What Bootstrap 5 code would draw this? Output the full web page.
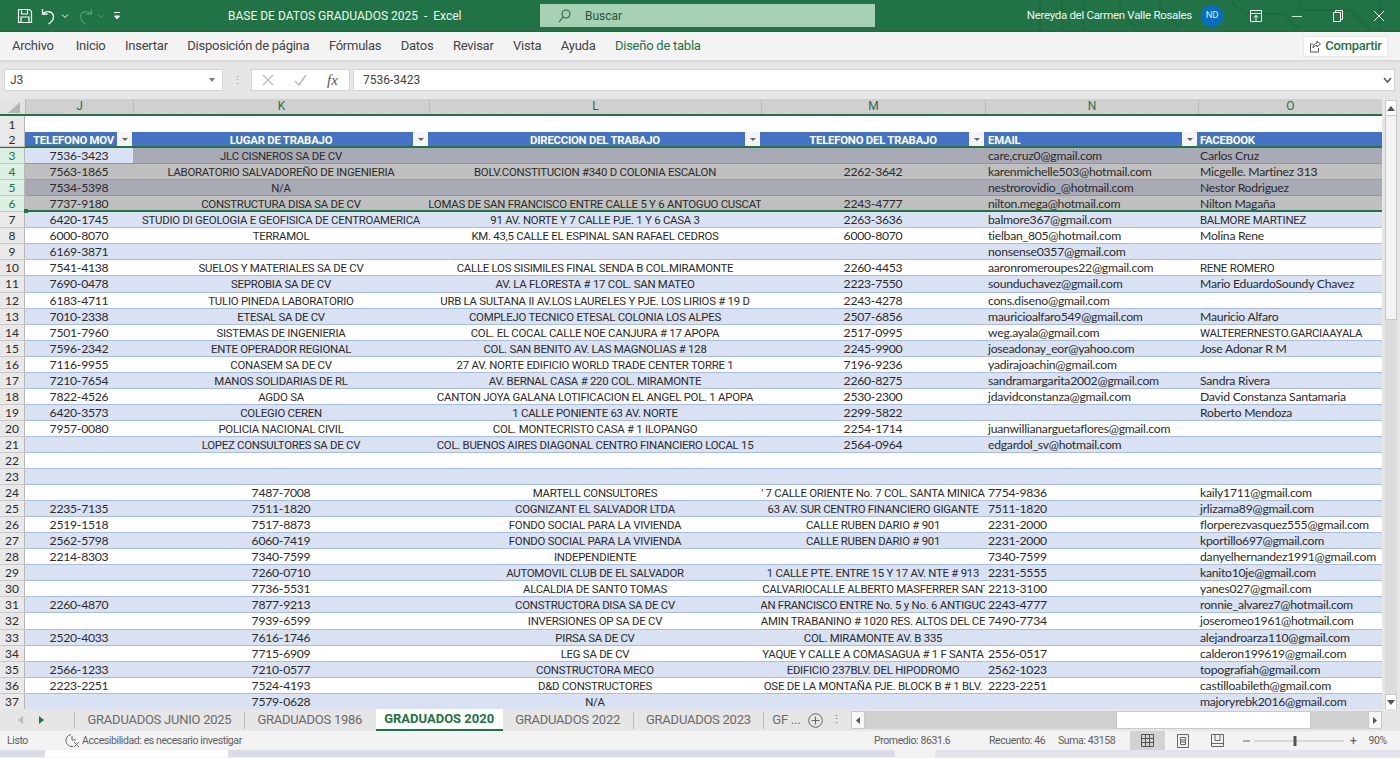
<!DOCTYPE html>
<html lang="es"><head><meta charset="utf-8"><title>BASE DE DATOS GRADUADOS 2025 - Excel</title>
<link href="https://cdn.jsdelivr.net/npm/bootstrap@5.3.0/dist/css/bootstrap.min.css" rel="stylesheet">
<style>
html,body{height:758px;overflow:hidden;background:#f3f3f3}
body{font-family:Roboto,"Liberation Sans",sans-serif;color:#333;font-size:12px}
.xl-title{height:31px;background:#217346;color:#eef6f0;position:relative}
.xl-qat{width:228px;padding-left:17px}
.xl-doc{width:312px;font-size:12px;white-space:pre}
.xl-search{width:335px;height:23px;background:#a7d1b3;color:#28563b;padding-left:18px;gap:14px;font-size:12px}
.xl-user{margin-left:auto;margin-right:1px;font-size:11.5px;letter-spacing:-.3px;white-space:nowrap}
.xl-avatar{width:22px;height:22px;border-radius:50%;background:#0a6dc2;font-size:9.5px;margin:0 12px 0 9px;color:#dcecf8}
.xl-winbtn{width:41px;display:flex;justify-content:center}
.xl-ribbon{height:29px;background:#f3f3f3;padding-left:12px;gap:19.5px;font-size:13px;letter-spacing:-.25px;color:#444;border-top:1px solid #1d6a40}
.xl-ribbon .xl-file{margin-right:2.5px}
.xl-ribbon .xl-design{color:#217346}
.xl-share{margin-left:auto;margin-right:12px;width:85px;height:21px;background:#fff;border:1px solid #e8e8e8;color:#217346;font-size:13px;font-weight:500;gap:4px}
.xl-fbar{height:39px;background:#e6e6e6;padding:9px 5px 8px 4px;box-shadow:inset 0 4px 3px -3px #cfcfcf}
.xl-box{height:22px;background:#fff;border:1px solid #d4d4d4;font-size:12px;color:#444}
.xl-name{width:219px;padding:0 6px 0 5px}
.xl-dots{width:28px;color:#999;text-align:center;font-size:11px;line-height:1}
.xl-tools{width:99px;gap:20px;padding-left:10px}
.xl-input{flex:1;margin-left:3px;padding:0 2px 0 9px}
.xl-sheet{height:611px;background:#e6e6e6}
.xl-cols{height:17px;display:grid;grid-template-columns:25px 108px 296px 332px 224px 213px 184px;background:#d0d0d0;border-bottom:2px solid #217346;color:#2d6e4a;font-size:12px;text-align:center;line-height:15px;width:1382px}
.xl-cols>div{border-left:1px solid #bbb}
.xl-corner{background:#e3e3e3;position:relative;border-left:0!important;overflow:hidden}
.xl-corner svg{display:block;margin:1px 0 0 3px}
table.xl-grid{display:block;width:1382px;font-family:Roboto,"Liberation Sans",sans-serif;font-size:11.4px;letter-spacing:-.25px;color:#2b2b2b}
.xl-grid tbody{display:block}
.xl-grid tr{display:grid;grid-template-columns:25px 108px 296px 332px 224px 213px 184px;height:16.06px;background:#fff;border-bottom:1px solid #a9bde3}
.xl-grid tr.xl-b{background:#d9e2f3}
.xl-grid th,.xl-grid td{display:flex;justify-content:center;align-items:center;overflow:hidden;white-space:nowrap;padding:1px 0 0;font-weight:400;line-height:14px}
.xl-grid tr:not(.xl-hd) td:nth-child(2),.xl-grid tr:not(.xl-hd):nth-child(n+24) td:nth-child(3),.xl-grid tr:not(.xl-hd):nth-child(-n+21) td:nth-child(5),.xl-grid tr:not(.xl-hd) td.xl-l:not(.xl-cap){font-family:Lato,"Liberation Sans",sans-serif;font-size:12.2px;letter-spacing:-.25px}
.xl-grid th{background:#e9e9e9;border-right:1px solid #b7b7b7;font-size:12px;letter-spacing:0;font-family:Lato,sans-serif;box-shadow:0 1px 0 #c9c9c9}
.xl-grid td.xl-l{justify-content:flex-start;padding-left:3px}
.xl-grid td:nth-child(7).xl-l{padding-left:2px}
.xl-grid tr.xl-blank{border-bottom:0}
.xl-grid tr.xl-hd{background:#4472c4;border-bottom:2px solid #217346;height:16.06px}
.xl-grid tr.xl-hd td{color:#fff;font-weight:700;position:relative;padding-top:2px}
.xl-grid tr.xl-hd td:nth-child(2){justify-content:flex-start;padding-left:8px}
.xl-grid tr.xl-hd th{background:#e9e9e9}
.xl-flt{position:absolute;right:1px;top:0;width:15px;height:15px;background:#f4f4f4;display:flex;align-items:center;justify-content:center}
.xl-flt::after{content:"";border:3px solid transparent;border-top:3px solid #666;margin-top:3px}
.xl-grid tr.xl-s th{background:#dcefe3;color:#217346}
.xl-grid tr.xl-g1{background:#a8aab6;border-bottom-color:#8f94a8}
.xl-grid tr.xl-g2{background:#bfbfbf;border-bottom-color:#9aa0b2}
.xl-grid tr.xl-g1 .xl-act{background:#d9e2f3}
.xl-grid tr.xl-end{border-bottom:2px solid #217346;position:relative}
.xl-grid tr.xl-end th{position:relative;overflow:visible}
.xl-grid tr.xl-end th::after{content:"";position:absolute;right:-4px;bottom:-2px;width:4px;height:4px;background:#217346}
.xl-vs{width:18px;padding:1px 3px 0}
.xl-vbtn{height:16px;background:#fff;border:1px solid #c9c9c9;display:flex;align-items:center;justify-content:center}
.xl-vthumb{height:204px;background:#f3f3f3;border:1px solid #c9c9c9;border-top:0}
.xl-vfree{flex:1;background:#dcdcdc}
.xl-tabs{height:22px;background:#e6e6e6;font-size:13px;color:#6a6a6a;white-space:nowrap;margin-top:-1px}
.xl-nav{width:75px;gap:16px;padding-left:18px;border-right:1px solid #bdbdbd;height:17px}
.xl-tab{padding:0 12.5px;height:17px;border-right:1px solid #bdbdbd;line-height:15px;letter-spacing:-.25px}
.xl-tab.xl-plain{border-right:0}
.xl-tab.xl-active{height:22px;line-height:20px;padding:0 8.5px;background:#fff;color:#217346;font-weight:700;border:0;border-bottom:2px solid #217346;margin-left:1px;letter-spacing:0}
.xl-hs{height:18px;background:#d0d0d0;flex:0 0 531px;margin-left:auto;margin-right:18px}
.xl-hbtn{width:14px;height:18px;background:#f7f7f7;border:1px solid #c9c9c9;display:flex;align-items:center;justify-content:center}
.xl-hthumb{width:195px;height:18px;background:#fff;border:1px solid #c9c9c9;margin-left:251px;margin-right:57px}
.xl-status{height:19px;background:#f3f3f3;font-size:10.5px;letter-spacing:-.4px;color:#5e5e5e;padding-left:7px;white-space:nowrap}
.xl-vw{width:35px;height:19px;display:flex;align-items:center;justify-content:center}
.xl-vw.xl-on{background:#d3d3d3}
.xl-zoom{margin-left:8px;font-size:12px}
.xl-zoom .xl-plus{margin-left:3px}
.xl-zoom .xl-pct{margin-left:12px;font-size:10.5px}
.xl-taskbar{height:7px;background:#d9dde6}
.xl-tb1{width:45px}.xl-tb2{width:183px;background:#fff}.xl-tb3{width:667px}.xl-tb4{width:40px;background:#f2f2f2}.xl-tb5{flex:1;background:#e1e4eb}
</style></head><body>
<div class="xl-title d-flex align-items-center">
  <svg class="position-absolute top-0 end-0" width="400" height="31" fill="none" stroke="#1e6b41" stroke-width="2"><path d="M40 0v31M62 0v31M84 0v31M120 0v12l14 14v5M160 0v8l20 20M230 0l14 14h40l14 14M300 0v10h50l20 20M380 0v31"/></svg>
  <div class="xl-qat d-flex align-items-center position-relative">
    <svg width="16" height="16" viewBox="0 0 16 16" fill="none" stroke="#fff" stroke-width="1.2"><path d="M1.500 1.500h11l2 2v11h-13zM4.500 1.500v4.500h6v-4.500M4 14.500v-5.500h8v5.500"/></svg>
    <svg class="ms-2" width="16" height="18" viewBox="0 0 16 18" fill="none" stroke="#fff" stroke-width="1.3"><path d="M1.500 2v5h5M1.500 7c3-4 11-3 11 3 0 3-2 5-5 7"/></svg>
    <svg class="ms-1" width="8" height="8" viewBox="0 0 8 8" fill="none" stroke="#fff"><path d="M1 2.500l3 3 3-3"/></svg>
    <svg class="ms-2" width="16" height="18" viewBox="0 0 16 18" fill="none" stroke="#4f9a70" stroke-width="1.3"><path d="M14.500 2v5h-5M14.500 7c-3-4-11-3-11 3 0 3 2 5 5 7"/></svg>
    <svg class="ms-1" width="8" height="8" viewBox="0 0 8 8" fill="none" stroke="#4f9a70"><path d="M1 2.500l3 3 3-3"/></svg>
    <svg class="ms-2" width="8" height="10" viewBox="0 0 8 10" fill="#fff" stroke="#fff"><path d="M1 1.500h6" fill="none"/><path d="M1.500 5h5l-2.500 3z"/></svg>
  </div>
  <div class="xl-doc position-relative">BASE DE DATOS GRADUADOS 2025  -  Excel</div>
  <div class="xl-search d-flex align-items-center position-relative">
    <svg width="13" height="14" viewBox="0 0 13 14" fill="none" stroke="#2a5c3f" stroke-width="1.1"><circle cx="8" cy="5" r="4"/><path d="M5 8l-4 5"/></svg><span>Buscar</span>
  </div>
  <div class="xl-user d-flex align-items-center position-relative">
    <span>Nereyda del Carmen Valle Rosales</span>
    <span class="xl-avatar d-flex align-items-center justify-content-center">ND</span>
    <span class="xl-winbtn"><svg width="14" height="14" viewBox="0 0 14 14" fill="none" stroke="#fff"><path d="M1.500 1.500h11v11h-11zM1.500 4.500h11M7 12V6.500M4.800 8.500L7 6.300l2.200 2.200"/></svg></span>
    <span class="xl-winbtn"><svg width="12" height="12" viewBox="0 0 12 12" stroke="#cfe3d7"><path d="M1 6.500h10"/></svg></span>
    <span class="xl-winbtn"><svg width="12" height="14" viewBox="0 0 12 14" fill="none" stroke="#fff"><path d="M1.500 3.500h7v9h-7zM3.500 3.500v-2h7v9h-2"/></svg></span>
    <span class="xl-winbtn"><svg width="12" height="12" viewBox="0 0 12 12" stroke="#fff"><path d="M1 1l10 10M11 1L1 11"/></svg></span>
  </div>
</div>
<div class="xl-ribbon d-flex align-items-center">
  <span class="xl-file">Archivo</span><span>Inicio</span><span>Insertar</span><span>Disposición de página</span><span>Fórmulas</span><span>Datos</span><span>Revisar</span><span>Vista</span><span>Ayuda</span><span class="xl-design">Diseño de tabla</span>
  <span class="xl-share d-flex align-items-center justify-content-center"><svg width="12" height="13" viewBox="0 0 12 13" fill="none" stroke="#555"><path d="M4 4H1.500v8h8V8M4 8c0-3 2-5 4-5V1l3.500 3L8 7V5.500C6 5.500 5 6.500 4 8z"/></svg>Compartir</span>
</div>
<div class="xl-fbar d-flex">
  <div class="xl-box xl-name d-flex align-items-center justify-content-between"><span>J3</span><svg width="8" height="6" viewBox="0 0 8 6" fill="#777"><path d="M1 1h6L4 5z"/></svg></div>
  <div class="xl-dots d-flex align-items-center justify-content-center">⋮</div>
  <div class="xl-box xl-tools d-flex align-items-center">
    <svg width="12" height="12" viewBox="0 0 12 12" stroke="#bbb" stroke-width="1.4"><path d="M1 1l10 10M11 1L1 11"/></svg>
    <svg width="13" height="12" viewBox="0 0 13 12" fill="none" stroke="#bbb" stroke-width="1.6"><path d="M1 7l4 4 7-10"/></svg>
    <span style="font-family:'Liberation Serif',serif;font-style:italic;font-size:15px;color:#555">fx</span>
  </div>
  <div class="xl-box xl-input d-flex align-items-center justify-content-between"><span>7536-3423</span><svg width="9" height="7" viewBox="0 0 9 7" fill="none" stroke="#555" stroke-width="1.500"><path d="M1 1l3.500 4L8 1"/></svg></div>
</div>
<div class="xl-sheet d-flex">
 <div>
  <div class="xl-cols"><div class="xl-corner"><svg width="20" height="14" viewBox="0 0 20 14" fill="#b5b5b5"><path d="M17 2v11H5z"/></svg></div><div>J</div><div>K</div><div>L</div><div>M</div><div>N</div><div>O</div></div>
  <table class="xl-grid"><tbody>
<tr class="xl-blank"><th>1</th><td></td><td></td><td></td><td></td><td></td><td></td></tr>
<tr class="xl-hd"><th>2</th><td>TELEFONO MOV<span class="xl-flt"></span></td><td>LUGAR DE TRABAJO<span class="xl-flt"></span></td><td>DIRECCION DEL TRABAJO<span class="xl-flt"></span></td><td>TELEFONO DEL TRABAJO<span class="xl-flt"></span></td><td class="xl-l xl-cap">EMAIL<span class="xl-flt"></span></td><td class="xl-l xl-cap">FACEBOOK</td></tr>
<tr class="xl-s xl-g1"><th>3</th><td class="xl-act">7536-3423</td><td>JLC CISNEROS SA DE CV</td><td></td><td></td><td class="xl-l">care,cruz0@gmail.com</td><td class="xl-l">Carlos Cruz</td></tr>
<tr class="xl-s xl-g2"><th>4</th><td>7563-1865</td><td>LABORATORIO SALVADOREÑO DE INGENIERIA</td><td>BOLV.CONSTITUCION #340 D COLONIA ESCALON</td><td>2262-3642</td><td class="xl-l">karenmichelle503@hotmail.com</td><td class="xl-l">Micgelle. Martinez 313</td></tr>
<tr class="xl-s xl-g1"><th>5</th><td>7534-5398</td><td>N/A</td><td></td><td></td><td class="xl-l">nestrorovidio_@hotmail.com</td><td class="xl-l">Nestor Rodriguez</td></tr>
<tr class="xl-s xl-g2 xl-end"><th>6</th><td>7737-9180</td><td>CONSTRUCTURA DISA SA DE CV</td><td>LOMAS DE SAN FRANCISCO ENTRE CALLE 5 Y 6 ANTOGUO CUSCAT</td><td>2243-4777</td><td class="xl-l">nilton.mega@hotmail.com</td><td class="xl-l">Nilton Magaña</td></tr>
<tr class="xl-b"><th>7</th><td>6420-1745</td><td>STUDIO DI GEOLOGIA E GEOFISICA DE CENTROAMERICA</td><td>91 AV. NORTE Y 7 CALLE PJE. 1 Y 6 CASA 3</td><td>2263-3636</td><td class="xl-l">balmore367@gmail.com</td><td class="xl-l xl-cap">BALMORE MARTINEZ</td></tr>
<tr><th>8</th><td>6000-8070</td><td>TERRAMOL</td><td>KM. 43,5 CALLE EL ESPINAL SAN RAFAEL CEDROS</td><td>6000-8070</td><td class="xl-l">tielban_805@hotmail.com</td><td class="xl-l">Molina Rene</td></tr>
<tr class="xl-b"><th>9</th><td>6169-3871</td><td></td><td></td><td></td><td class="xl-l">nonsense0357@gmail.com</td><td></td></tr>
<tr><th>10</th><td>7541-4138</td><td>SUELOS Y MATERIALES SA DE CV</td><td>CALLE LOS SISIMILES FINAL SENDA B COL.MIRAMONTE</td><td>2260-4453</td><td class="xl-l">aaronromeroupes22@gmail.com</td><td class="xl-l xl-cap">RENE ROMERO</td></tr>
<tr class="xl-b"><th>11</th><td>7690-0478</td><td>SEPROBIA SA DE CV</td><td>AV. LA FLORESTA # 17 COL. SAN MATEO</td><td>2223-7550</td><td class="xl-l">sounduchavez@gmail.com</td><td class="xl-l">Mario EduardoSoundy Chavez</td></tr>
<tr><th>12</th><td>6183-4711</td><td>TULIO PINEDA LABORATORIO</td><td>URB LA SULTANA II AV.LOS LAURELES Y PJE. LOS LIRIOS # 19 D</td><td>2243-4278</td><td class="xl-l">cons.diseno@gmail.com</td><td></td></tr>
<tr class="xl-b"><th>13</th><td>7010-2338</td><td>ETESAL SA DE CV</td><td>COMPLEJO TECNICO ETESAL COLONIA LOS ALPES</td><td>2507-6856</td><td class="xl-l">mauricioalfaro549@gmail.com</td><td class="xl-l">Mauricio Alfaro</td></tr>
<tr><th>14</th><td>7501-7960</td><td>SISTEMAS DE INGENIERIA</td><td>COL. EL COCAL CALLE NOE CANJURA # 17 APOPA</td><td>2517-0995</td><td class="xl-l">weg.ayala@gmail.com</td><td class="xl-l xl-cap">WALTERERNESTO.GARCIAAYALA</td></tr>
<tr class="xl-b"><th>15</th><td>7596-2342</td><td>ENTE OPERADOR REGIONAL</td><td>COL. SAN BENITO AV. LAS MAGNOLIAS # 128</td><td>2245-9900</td><td class="xl-l">joseadonay_eor@yahoo.com</td><td class="xl-l">Jose Adonar R M</td></tr>
<tr><th>16</th><td>7116-9955</td><td>CONASEM SA DE CV</td><td>27 AV. NORTE EDIFICIO WORLD TRADE CENTER TORRE 1</td><td>7196-9236</td><td class="xl-l">yadirajoachin@gmail.com</td><td></td></tr>
<tr class="xl-b"><th>17</th><td>7210-7654</td><td>MANOS SOLIDARIAS DE RL</td><td>AV. BERNAL CASA # 220 COL. MIRAMONTE</td><td>2260-8275</td><td class="xl-l">sandramargarita2002@gmail.com</td><td class="xl-l">Sandra Rivera</td></tr>
<tr><th>18</th><td>7822-4526</td><td>AGDO SA</td><td>CANTON JOYA GALANA LOTIFICACION EL ANGEL POL. 1 APOPA</td><td>2530-2300</td><td class="xl-l">jdavidconstanza@gmail.com</td><td class="xl-l">David Constanza Santamaria</td></tr>
<tr class="xl-b"><th>19</th><td>6420-3573</td><td>COLEGIO CEREN</td><td>1 CALLE PONIENTE 63 AV. NORTE</td><td>2299-5822</td><td></td><td class="xl-l">Roberto Mendoza</td></tr>
<tr><th>20</th><td>7957-0080</td><td>POLICIA NACIONAL CIVIL</td><td>COL. MONTECRISTO CASA # 1 ILOPANGO</td><td>2254-1714</td><td class="xl-l">juanwillianarguetaflores@gmail.com</td><td></td></tr>
<tr class="xl-b"><th>21</th><td></td><td>LOPEZ CONSULTORES SA DE CV</td><td>COL. BUENOS AIRES DIAGONAL CENTRO FINANCIERO LOCAL 15</td><td>2564-0964</td><td class="xl-l">edgardol_sv@hotmail.com</td><td></td></tr>
<tr><th>22</th><td></td><td></td><td></td><td></td><td></td><td></td></tr>
<tr class="xl-b"><th>23</th><td></td><td></td><td></td><td></td><td></td><td></td></tr>
<tr><th>24</th><td></td><td>7487-7008</td><td>MARTELL CONSULTORES</td><td>' 7 CALLE ORIENTE No. 7 COL. SANTA MINICA</td><td class="xl-l">7754-9836</td><td class="xl-l">kaily1711@gmail.com</td></tr>
<tr class="xl-b"><th>25</th><td>2235-7135</td><td>7511-1820</td><td>COGNIZANT EL SALVADOR LTDA</td><td>63 AV. SUR CENTRO FINANCIERO GIGANTE</td><td class="xl-l">7511-1820</td><td class="xl-l">jrlizama89@gmail.com</td></tr>
<tr><th>26</th><td>2519-1518</td><td>7517-8873</td><td>FONDO SOCIAL PARA LA VIVIENDA</td><td>CALLE RUBEN DARIO # 901</td><td class="xl-l">2231-2000</td><td class="xl-l">florperezvasquez555@gmail.com</td></tr>
<tr class="xl-b"><th>27</th><td>2562-5798</td><td>6060-7419</td><td>FONDO SOCIAL PARA LA VIVIENDA</td><td>CALLE RUBEN DARIO # 901</td><td class="xl-l">2231-2000</td><td class="xl-l">kportillo697@gmail.com</td></tr>
<tr><th>28</th><td>2214-8303</td><td>7340-7599</td><td>INDEPENDIENTE</td><td></td><td class="xl-l">7340-7599</td><td class="xl-l">danyelhernandez1991@gmail.com</td></tr>
<tr class="xl-b"><th>29</th><td></td><td>7260-0710</td><td>AUTOMOVIL CLUB DE EL SALVADOR</td><td>1 CALLE PTE. ENTRE 15 Y 17 AV. NTE # 913</td><td class="xl-l">2231-5555</td><td class="xl-l">kanito10je@gmail.com</td></tr>
<tr><th>30</th><td></td><td>7736-5531</td><td>ALCALDIA DE SANTO TOMAS</td><td>. CALVARIOCALLE ALBERTO MASFERRER SANT</td><td class="xl-l">2213-3100</td><td class="xl-l">yanes027@gmail.com</td></tr>
<tr class="xl-b"><th>31</th><td>2260-4870</td><td>7877-9213</td><td>CONSTRUCTORA DISA SA DE CV</td><td>AN FRANCISCO ENTRE No. 5 y No. 6 ANTIGUC</td><td class="xl-l">2243-4777</td><td class="xl-l">ronnie_alvarez7@hotmail.com</td></tr>
<tr><th>32</th><td></td><td>7939-6599</td><td>INVERSIONES OP SA DE CV</td><td>AMIN TRABANINO # 1020 RES. ALTOS DEL CE</td><td class="xl-l">7490-7734</td><td class="xl-l">joseromeo1961@hotmail.com</td></tr>
<tr class="xl-b"><th>33</th><td>2520-4033</td><td>7616-1746</td><td>PIRSA SA DE CV</td><td>COL. MIRAMONTE AV. B 335</td><td></td><td class="xl-l">alejandroarza110@gmail.com</td></tr>
<tr><th>34</th><td></td><td>7715-6909</td><td>LEG SA DE CV</td><td>YAQUE Y CALLE A COMASAGUA # 1 F SANTA</td><td class="xl-l">2556-0517</td><td class="xl-l">calderon199619@gmail.com</td></tr>
<tr class="xl-b"><th>35</th><td>2566-1233</td><td>7210-0577</td><td>CONSTRUCTORA MECO</td><td>EDIFICIO 237BLV. DEL HIPODROMO</td><td class="xl-l">2562-1023</td><td class="xl-l">topografiah@gmail.com</td></tr>
<tr><th>36</th><td>2223-2251</td><td>7524-4193</td><td>D&amp;D CONSTRUCTORES</td><td>OSE DE LA MONTAÑA PJE. BLOCK B # 1 BLV.</td><td class="xl-l">2223-2251</td><td class="xl-l">castilloabileth@gmail.com</td></tr>
<tr class="xl-b"><th>37</th><td></td><td>7579-0628</td><td>N/A</td><td></td><td></td><td class="xl-l">majoryrebk2016@gmail.com</td></tr>
  </tbody></table>
 </div>
 <div class="xl-vs d-flex flex-column">
  <div class="xl-vbtn"><svg width="8" height="5" viewBox="0 0 8 5" fill="#555"><path d="M4 0l4 5H0z"/></svg></div>
  <div class="xl-vthumb"></div><div class="xl-vfree"></div>
  <div class="xl-vbtn"><svg width="8" height="5" viewBox="0 0 8 5" fill="#555"><path d="M4 5l4-5H0z"/></svg></div>
 </div>
</div>
<div class="xl-tabs d-flex align-items-center position-relative">
  <div class="xl-nav d-flex align-items-center"><svg width="5" height="8" viewBox="0 0 5 8" fill="#bbb"><path d="M5 0v8L0 4z"/></svg><svg width="5" height="8" viewBox="0 0 5 8" fill="#217346"><path d="M0 0v8l5-4z"/></svg></div>
  <span class="xl-tab">GRADUADOS JUNIO 2025</span><span class="xl-tab xl-plain">GRADUADOS 1986</span><span class="xl-tab xl-active">GRADUADOS 2020</span><span class="xl-tab">GRADUADOS 2022</span><span class="xl-tab">GRADUADOS 2023</span><span class="xl-tab xl-plain ps-2 pe-0">GF ...</span>
  <svg class="ms-2" width="15" height="15" viewBox="0 0 15 15" fill="none" stroke="#666"><circle cx="7.500" cy="7.500" r="6.800"/><path d="M7.500 3.500v8M3.500 7.500h8"/></svg>
  <span class="ms-2 text-secondary" style="font-size:11px">⋮</span>
  <div class="xl-hs d-flex align-items-center"><span class="xl-hbtn"><svg width="4" height="7" viewBox="0 0 4 7" fill="#555"><path d="M4 0v7L0 3.500z"/></svg></span><span class="xl-hthumb"></span><span class="xl-hbtn"><svg width="4" height="7" viewBox="0 0 4 7" fill="#555"><path d="M0 0v7l4-3.500z"/></svg></span></div>
</div>
<div class="xl-status d-flex align-items-center">
  <span style="width:58px">Listo</span>
  <svg width="15" height="15" viewBox="0 0 15 15" fill="none" stroke="#666"><path d="M6 1.500a6 6 0 1 0 2 12M7 3v4h4M9 9l5 5M14 9l-5 5"/></svg>
  <span style="width:792px;margin-left:2px">Accesibilidad: es necesario investigar</span>
  <span style="width:115px">Promedio: 8631.6</span><span style="width:69px">Recuento: 46</span><span style="width:72px">Suma: 43158</span>
  <span class="xl-vw xl-on"><svg width="13" height="13" viewBox="0 0 13 13" fill="none" stroke="#555"><path d="M.5.5h12v12H.5zM.5 4.500h12M.5 8.500h12M4.500.5v12M8.500.5v12"/></svg></span>
  <span class="xl-vw"><svg width="12" height="14" viewBox="0 0 12 14" fill="none" stroke="#666"><path d="M.5.5h11v13H.5zM3.500 3.500h5v7h-5zM3.500 6h5M3.500 8h5"/></svg></span>
  <span class="xl-vw"><svg width="13" height="13" viewBox="0 0 13 13" fill="none" stroke="#666"><path d="M.5.5h12v12H.5zM4 .5v6h5v-6M.5 9.500h12"/></svg></span>
  <span class="xl-zoom d-flex align-items-center"><svg width="104" height="12" viewBox="0 0 104 12" fill="none"><path d="M0 6h7" stroke="#666"/><path d="M11 6h90" stroke="#bbb"/><path d="M52 1v10" stroke="#555" stroke-width="3"/></svg><span class="xl-plus">+</span><span class="xl-pct">90%</span></span>
</div>
<div class="xl-taskbar d-flex"><span class="xl-tb1"></span><span class="xl-tb2"></span><span class="xl-tb3"></span><span class="xl-tb4"></span><span class="xl-tb5"></span></div>
</body></html>
